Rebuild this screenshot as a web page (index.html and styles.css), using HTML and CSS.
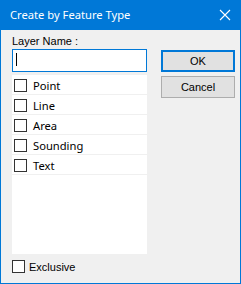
FILE: index.html
```html
<!DOCTYPE html>
<html>
	<head>
		<meta charset="utf-8" />
		<title>Create by Feature Type</title>
		<link rel="stylesheet" href="styles.css">
	</head>
	<body>
		<div class="window">
			<div class="titlebar">
				<span class="title">Create by Feature Type</span>
				<svg class="close" width="12" height="12" viewBox="0 0 12 12">
					<path d="M1 1 L11 11 M11 1 L1 11" stroke="#fff" stroke-width="1.1" fill="none"/>
				</svg>
			</div>
			<div class="body">
				<div class="main">
					<div class="left">
						<div class="label">Layer Name :</div>
						<div class="textbox"><span class="caret"></span></div>
						<ul class="list">
							<li><span class="check"></span>Point</li>
							<li><span class="check"></span>Line</li>
							<li><span class="check"></span>Area</li>
							<li><span class="check"></span>Sounding</li>
							<li><span class="check"></span>Text</li>
						</ul>
					</div>
					<div class="buttons">
						<button class="btn default">OK</button>
						<button class="btn">Cancel</button>
					</div>
				</div>
				<div class="exclusive"><span class="check"></span>Exclusive</div>
			</div>
		</div>
	</body>
</html>
```

FILE: styles.css
```css
*{
	margin: 0;
	padding: 0;
	box-sizing: border-box;
}
body{
	width: 241px;
	height: 284px;
	overflow: hidden;
}
.window{
	width: 241px;
	height: 284px;
	border: 1px solid #0078d7;
	border-top: 0;
	background: #f0f0f0;
	display: flex;
	flex-direction: column;
}
.titlebar{
	height: 30px;
	margin: 0 -1px;
	background: #0078d7;
	color: #fff;
	display: flex;
	align-items: center;
	padding-left: 10px;
	font-family: "Noto Sans", sans-serif;
	font-size: 11.2px;
}
.title{
	flex: 1;
	padding-bottom: 1px;
}
.close{
	margin-right: 10px;
	margin-bottom: 1px;
}
.body{
	padding: 3px 5px 0 11px;
	font-family: "Liberation Sans", sans-serif;
	font-size: 11px;
	color: #000;
}
.main{
	display: flex;
	gap: 14px;
}
.left{
	width: 135px;
}
.label{
	height: 16px;
	line-height: 16px;
}
.textbox{
	height: 23px;
	border: 1px solid #0078d7;
	background: #fff;
	margin-bottom: 3px;
	padding: 3px 0 0 3px;
}
.caret{
	display: block;
	width: 1px;
	height: 13px;
	background: #000;
}
.list{
	list-style: none;
	background: #fff;
	height: 179px;
	font-family: "Noto Sans", sans-serif;
	font-size: 11.2px;
}
.list li{
	height: 20px;
	border-bottom: 1px solid #f0f0f0;
	display: flex;
	align-items: center;
	padding: 1px 0 0 2px;
	gap: 6px;
}
.check{
	width: 13px;
	height: 13px;
	border: 1px solid #333;
	background: #fff;
	flex: none;
}
.buttons{
	width: 74px;
	padding-top: 17px;
	display: flex;
	flex-direction: column;
	gap: 4px;
}
.btn{
	height: 22px;
	background: #e1e1e1;
	border: 1px solid #adadad;
	font-family: "Liberation Sans", sans-serif;
	font-size: 11px;
	color: #000;
}
.btn.default{
	border: 2px solid #0078d7;
}
.exclusive{
	margin-top: 6px;
	display: flex;
	align-items: center;
	gap: 4px;
}
```
